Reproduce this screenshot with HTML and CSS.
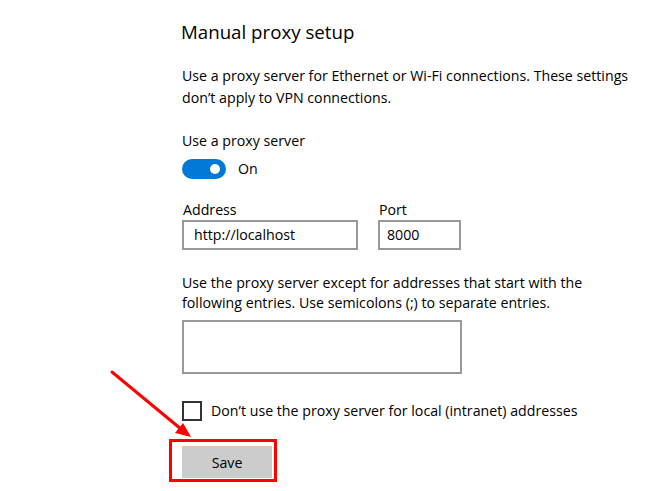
FILE: index.html
```html
<!DOCTYPE html>
<html lang="en">
<head>
<meta charset="utf-8">
<title>Manual proxy setup</title>
<link rel="stylesheet" href="styles.css">
</head>
<body>
<main class="panel">
  <h1 class="title">Manual proxy setup</h1>
  <p class="desc">Use a proxy server for Ethernet or Wi-Fi connections. These settings don’t apply to VPN connections.</p>

  <div class="label">Use a proxy server</div>
  <div class="toggle-row">
    <span class="toggle"><span class="knob"></span></span>
    <span class="toggle-text">On</span>
  </div>

  <div class="fields">
    <div class="field">
      <div class="field-label">Address</div>
      <div class="input input-address">http://localhost</div>
    </div>
    <div class="field">
      <div class="field-label">Port</div>
      <div class="input input-port">8000</div>
    </div>
  </div>

  <p class="desc desc-except">Use the proxy server except for addresses that start with the following entries. Use semicolons (;) to separate entries.</p>
  <div class="textarea"></div>

  <div class="check-row">
    <span class="checkbox"></span>
    <span class="check-text">Don’t use the proxy server for local (intranet) addresses</span>
  </div>

  <div class="save-wrap">
    <button class="save">Save</button>
  </div>
</main>

<div class="highlight"></div>
<svg class="arrow" width="100" height="80" viewBox="0 0 100 80">
  <line x1="7" y1="7" x2="82" y2="69" stroke="#ff0000" stroke-width="3" stroke-linecap="round"/>
  <polygon points="86,72 70,68 78,58" fill="#ff0000"/>
</svg>
</body>
</html>
```

FILE: styles.css
```css
* { box-sizing: border-box; }

html, body {
  margin: 0;
  padding: 0;
  background: #ffffff;
}

body {
  font-family: "Open Sans", "Noto Sans", sans-serif;
  color: #000000;
  width: 671px;
  height: 491px;
  overflow: hidden;
  position: relative;
}

.panel {
  padding: 17px 0 0 182px;
  display: flex;
  flex-direction: column;
  align-items: flex-start;
}

.title {
  margin: 0 0 0 -1px;
  font-size: 18.7px;
  font-weight: 400;
  line-height: 30px;
}

.desc {
  margin: 18px 0 0;
  font-size: 14.2px;
  line-height: 22px;
  width: 470px;
}

.label {
  margin-top: 22px;
  font-size: 14.2px;
  line-height: 20px;
}

.toggle-row {
  margin-top: 8px;
  display: flex;
  align-items: center;
  gap: 12px;
}

.toggle {
  width: 44px;
  height: 20px;
  border-radius: 10px;
  background: #0078d7;
  display: flex;
  align-items: center;
  justify-content: flex-end;
  padding-right: 6px;
}

.knob {
  width: 10px;
  height: 10px;
  border-radius: 50%;
  background: #ffffff;
}

.toggle-text {
  font-size: 14.2px;
  line-height: 20px;
}

.fields {
  margin-top: 21px;
  display: flex;
  gap: 20px;
}

.field-label {
  font-size: 14.2px;
  line-height: 20px;
  margin-left: 1px;
}

.input {
  height: 30px;
  border: 2px solid #999999;
  font-size: 14.2px;
  line-height: 26px;
  padding-left: 10px;
}

.input-address { width: 176px; }
.input-port { width: 83px; padding-left: 7px; }

.desc-except {
  margin-top: 23px;
  line-height: 20px;
  width: 420px;
}

.textarea {
  margin-top: 7px;
  width: 280px;
  height: 54px;
  border: 2px solid #999999;
}

.check-row {
  margin-top: 27px;
  display: flex;
  align-items: center;
  gap: 9px;
}

.checkbox {
  width: 20px;
  height: 20px;
  border: 2px solid #333333;
}

.check-text {
  font-size: 14.2px;
  line-height: 20px;
}

.save-wrap {
  margin-top: 25px;
}

.save {
  width: 90px;
  height: 32px;
  border: none;
  background: #cccccc;
  font-family: "Open Sans", "Noto Sans", sans-serif;
  font-size: 14.2px;
  color: #000000;
  padding: 0;
}

.highlight {
  position: absolute;
  left: 169px;
  top: 439px;
  width: 108px;
  height: 43px;
  border: 3px solid #ff0000;
}

.arrow {
  position: absolute;
  left: 105px;
  top: 365px;
}
```
